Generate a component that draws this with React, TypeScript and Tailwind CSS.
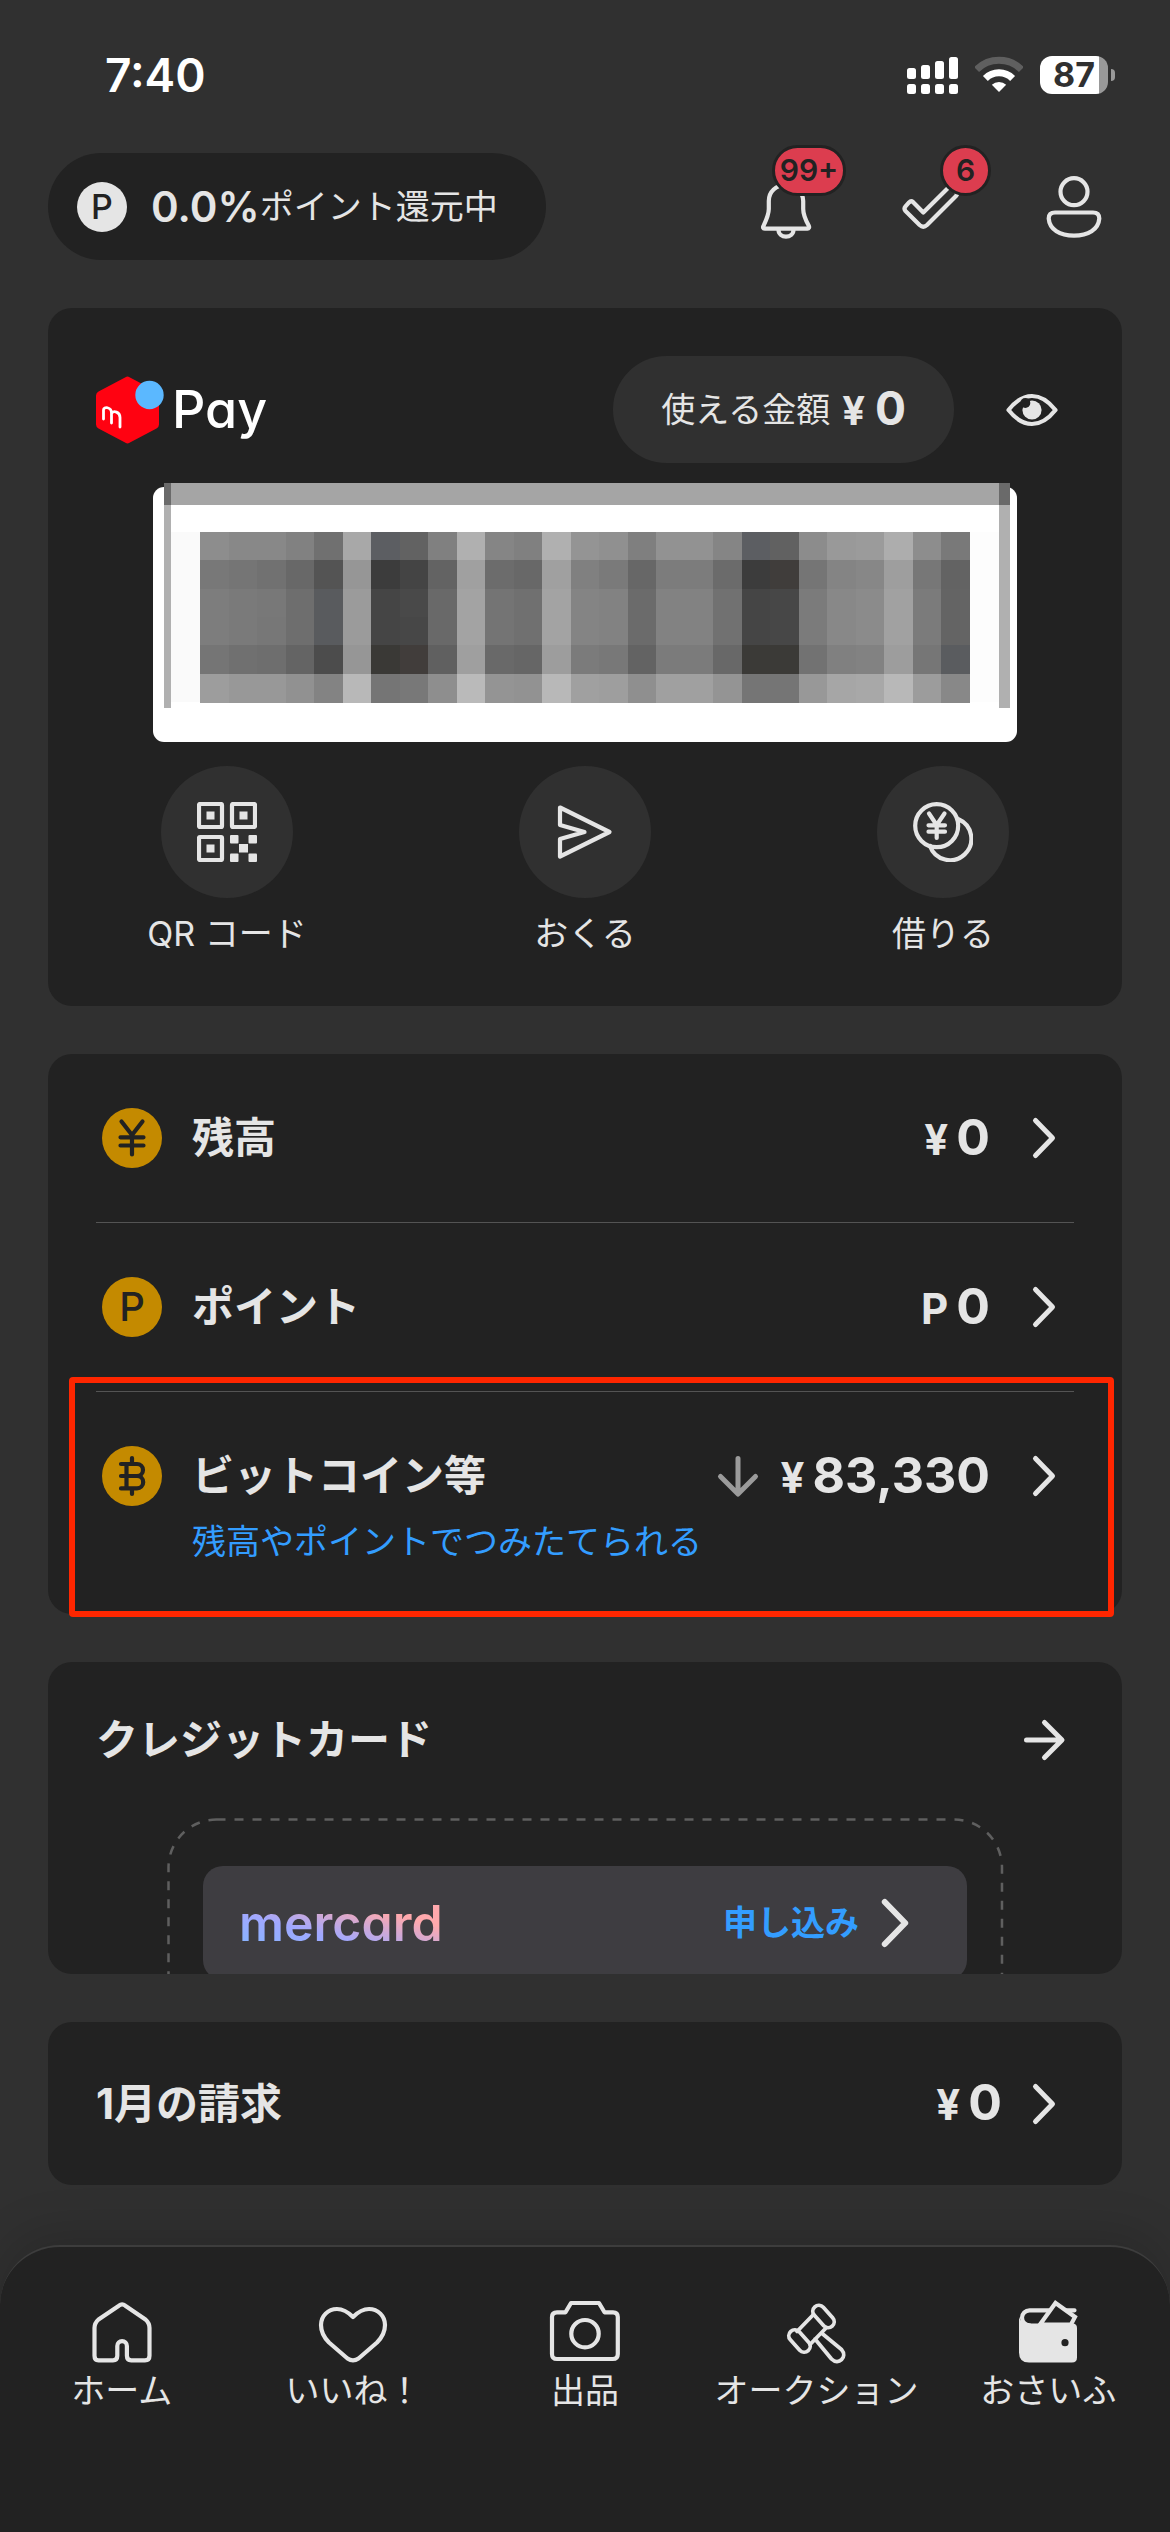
import type { ReactNode } from 'react'

// Columns of the masked barcode, one array per pixel row
const barcodeRows = [
  '8d8d8d 888888 888888 818181 707070 a8a8a8 5c5e62 626262 808080 b0b0b0 858585 808080 b0b0b0 949494 909090 7f7f7f 929292 929292 858585 5c5e62 616161 8c8c8c 999999 9b9b9b adadad 8d8d8d 797979',
  '787878 757575 717171 686868 545454 969696 3c3c3c 444444 636363 a0a0a0 6c6c6c 686868 a0a0a0 808080 7a7a7a 676767 7c7c7c 7c7c7c 6b6b6b 3c3c3c 403d3b 757575 848484 878787 9e9e9e 777777 636363',
  '7d7d7d 7a7a7a 787878 6e6e6e 595b5e 9b9b9b 454545 494949 696969 a3a3a3 747474 707070 a3a3a3 848484 828282 6b6b6b 828282 828282 717171 454545 474747 7b7b7b 888888 8b8b8b a1a1a1 7b7b7b 646464',
  '7d7d7d 7a7a7a 777777 6e6e6e 595b5e 9b9b9b 454545 474747 696969 a3a3a3 747474 707070 a3a3a3 848484 828282 6b6b6b 828282 828282 717171 454545 474747 7b7b7b 888888 8b8b8b a1a1a1 7b7b7b 646464',
  '757575 707070 6e6e6e 646464 4c4c4c 969696 3a3936 413d3b 606060 9f9f9f 696969 666666 9d9d9d 7b7b7b 787878 636363 7b7b7b 7b7b7b 686868 3b3a37 3b3a37 727272 808080 828282 9d9d9d 767676 5a5c5f',
  '9d9d9d 989898 989898 919191 838383 b8b8b8 757575 787878 8e8e8e bababa 949494 929292 b8b8b8 a0a0a0 9e9e9e 8f8f8f a0a0a0 a0a0a0 949494 757575 757575 989898 a6a6a6 a8a8a8 b8b8b8 9c9c9c 888888'
].map((row) => row.split(' '))

const line = {
  fill: 'none',
  stroke: 'currentColor',
  strokeWidth: 4.2,
  strokeLinecap: 'round',
  strokeLinejoin: 'round'
} as const

const SignalIcon = () => (
  <svg className="w-[51px] h-[38px]" viewBox="0 0 51 38" fill="#fff">
    <rect x="0" y="12" width="9" height="11" rx="2.5" />
    <rect x="14" y="9" width="9" height="14" rx="2.5" />
    <rect x="28" y="5" width="9" height="18" rx="2.5" />
    <rect x="42" y="1" width="9" height="22" rx="2.5" />
    {[0, 14, 28, 42].map((x) => (
      <rect key={x} x={x} y="28" width="9" height="10" rx="2.5" />
    ))}
  </svg>
)

const WifiIcon = () => (
  <svg className="w-12 h-[38px]" viewBox="0 0 48 38" fill="none">
    <path
      d="M1.6 13.6A31.7 31.7 0 0 1 46.4 13.6"
      stroke="#5f5f5f"
      strokeWidth="7"
    />
    <path
      d="M10.4 22.4A19.3 19.3 0 0 1 37.6 22.4"
      stroke="#fff"
      strokeWidth="7"
    />
    <path d="M24 36L16.8 28.8A10.5 10.5 0 0 1 31.2 28.8Z" fill="#fff" />
  </svg>
)

const BellIcon = () => (
  <svg className="size-[72px]" viewBox="0 0 72 72" {...line}>
    <path d="M15 57.7H57.5c1.4 0 2-1.3 1.4-2.6C55 48 53.2 43 53.2 38V30C53 20.5 46 14 36 14S18.8 20.5 18.8 30v8c0 5-2 10-5.4 17.1-.8 1.3-.1 2.6 1.6 2.6z" />
    <path d="M28.5 58.5C28.5 68 43.5 68 43.5 58.5" />
  </svg>
)

const CheckIcon = () => (
  <svg className="size-[72px]" viewBox="0 0 72 72" {...line}>
    <path d="M19 31L29.3 41.5L54 17q2.2-2 4.4 0l3.6 3.6q2 2.2 0 4.4L33 54q-3.7 3.4-7.4 0L11.5 40q-2-2.3 0-4.6l3.5-4q2-2 4-.4z" />
  </svg>
)

const PersonIcon = () => (
  <svg className="size-[72px]" viewBox="0 0 72 72" {...line}>
    <circle cx="36" cy="20.7" r="13.5" />
    <path d="M17 41.5H55q6.3 0 6.3 6C60.5 58.5 50 64.7 36 64.7S11.5 58.5 10.7 47.5q0-6 6.3-6z" />
  </svg>
)

const MerpayMark = () => (
  <svg className="size-[68px]" viewBox="0 0 68 68">
    <path
      d="M29.5 1.2q2-1.2 4 0L60.5 15.5q2.500 1.400 2.500 4V48.500q0 2.600-2.500 4L33.500 66.800q-2 1.200-4 0L2.500 52.500Q0 51.100 0 48.500V19.500q0-2.600 2.500-4z"
      fill="#ff0211"
    />
    <path
      d="M7.5 43V34c0-4 8-3 8 3v10M15.5 37.5c2-3.5 8.500-1.500 8.500 4V51"
      fill="none"
      stroke="#fff"
      strokeWidth="2.8"
      strokeLinecap="round"
    />
    <circle cx="53.5" cy="19" r="14.2" fill="#5bb8ff" />
  </svg>
)

const EyeIcon = () => (
  <svg className="w-[52px] h-[34px]" viewBox="0 0 52 34">
    <path
      d="M2.5 17C10 7.5 18 3 26 3S42 7.5 49.5 17C42 26.5 34 31 26 31S10 26.5 2.5 17Z"
      {...line}
    />
    <circle cx="26" cy="17" r="9.6" fill="currentColor" />
    <circle cx="19.3" cy="10" r="5" fill="#222" />
  </svg>
)

const QrIcon = () => (
  <svg className="size-[60px]" viewBox="0 0 60 60" fill="currentColor">
    {[
      [0, 0],
      [33, 0],
      [0, 33]
    ].map(([x, y]) => (
      <g key={`${x}-${y}`}>
        <rect
          x={x + 2}
          y={y + 2}
          width="23"
          height="23"
          rx="1"
          fill="none"
          stroke="currentColor"
          strokeWidth="4.2"
        />
        <rect x={x + 9.5} y={y + 9.5} width="8" height="8" />
      </g>
    ))}
    <rect x="33" y="33" width="8.5" height="8.5" rx="1" />
    <rect x="51.5" y="33" width="8.5" height="8.5" rx="1" />
    <rect x="42" y="42" width="9" height="8.5" />
    <rect x="33" y="51.5" width="8.5" height="8.5" rx="1" />
    <rect x="51.5" y="51.5" width="8.5" height="8.5" rx="1" />
  </svg>
)

const SendIcon = () => (
  <svg className="size-[60px]" viewBox="0 0 60 60" {...line}>
    <path d="M5 5.5L54.5 30L5 54.5V37L29.5 30L5 23Z" />
  </svg>
)

const CoinsIcon = () => (
  <svg className="size-[60px]" viewBox="0 0 60 60" {...line}>
    <circle cx="23.7" cy="23.7" r="21.5" />
    <path d="M45.5 17.3A21.3 21.3 0 1 1 17 44" />
    <path d="M16 11.5L23.7 23L31.5 11.5M23.7 23V36M15.5 23.3H32M15.5 29.7H32" />
  </svg>
)

const YenCoin = () => (
  <svg className="size-[60px]" viewBox="0 0 60 60">
    <circle cx="30" cy="30" r="30" fill="#c48a00" />
    <path
      d="M19.5 13.5L30 27L40.5 13.5M30 27V46.5M18.5 29.3H41.5M18.5 37.5H41.5"
      {...line}
      stroke="#222"
    />
  </svg>
)

const PointCoin = () => (
  <span className="flex size-[60px] items-center justify-center rounded-full bg-[#c48a00] text-[40px] font-medium text-[#222]">
    P
  </span>
)

const BitcoinCoin = () => (
  <svg className="size-[60px]" viewBox="0 0 60 60">
    <circle cx="30" cy="30" r="30" fill="#c48a00" />
    <path
      d="M19 18H35a6 6 0 0 1 0 12H19M35 30a6.2 6.2 0 0 1 0 12.4H19M24.5 18V42.4M30 12v6M30 42.4V48"
      {...line}
      stroke="#222"
    />
  </svg>
)

const ChevronIcon = ({ className = 'size-[60px]' }: { className?: string }) => (
  <svg className={className} viewBox="0 0 60 60" {...line} strokeWidth="5">
    <path d="M21.5 12.5L38.5 30L21.5 47.5" />
  </svg>
)

const ArrowRightIcon = () => (
  <svg className="size-[60px]" viewBox="0 0 60 60" {...line} strokeWidth="5">
    <path d="M12.5 30H47M30.5 12.5L48 30L30.5 47.5" />
  </svg>
)

const ArrowDownIcon = () => (
  <svg
    className="size-[60px] text-[#9b9b9b]"
    viewBox="0 0 60 60"
    {...line}
    strokeWidth="5"
  >
    <path d="M30 12.5V47M12.5 30.5L30 48L47.5 30.5" />
  </svg>
)

const HomeIcon = () => (
  <svg className="size-[72px]" viewBox="0 0 72 72" {...line}>
    <path d="M12.5 65.3H27q4.3 0 4.3-4.5V51a4.8 4.8 0 0 1 9.6 0v9.8q0 4.5 4.3 4.5H59q4.5 0 4.5-4.6V33q0-5-4-8.5L39.3 10.7q-3.2-2.6-6.4 0L12.5 24.5q-4 3.5-4 8.5v27.7q0 4.6 4 4.6z" />
  </svg>
)

const HeartIcon = () => (
  <svg className="size-[72px]" viewBox="0 0 72 72" {...line}>
    <path d="M36 22C31 17 26 14 20 14C11 14 4 21 4 30c0 7 3 12.5 8 17.5L30.5 63.5q5.5 3.6 11 0L60 47.5c5-5 8-10.5 8-17.5 0-9-7-16-16-16-6 0-11 3-16 8z" />
  </svg>
)

const CameraIcon = () => (
  <svg className="size-[72px]" viewBox="0 0 72 72" {...line}>
    <path d="M8 17.3H16.5L22 8H50L55.5 17.3H64q4.8 0 4.8 4.8V59q0 5-5 5H8q-5 0-5-5V22q0-4.7 5-4.7z" />
    <circle cx="36" cy="38.7" r="13.7" />
  </svg>
)

const GavelIcon = () => (
  <svg className="size-[72px]" viewBox="0 0 72 72" {...line} strokeWidth="3.8">
    <rect
      x="29.5"
      y="15.5"
      width="26"
      height="12"
      rx="6"
      transform="rotate(48 42.5 21.5)"
    />
    <rect
      x="5.5"
      y="40"
      width="26"
      height="12"
      rx="6"
      transform="rotate(48 18.5 46)"
    />
    <path d="M32.5 19.5L16 36.5M45.5 32.5L29 49.5M34 44L50.5 64c7 7 16.5-2 10-9.5L40.5 38" />
  </svg>
)

const WalletIcon = () => (
  <svg className="size-[72px]" viewBox="0 0 72 72">
    <path d="M62.5 15.3H17.5a7.5 7.5 0 0 0 0 15" {...line} />
    <path
      d="M7 22q1.5 6.5 10 6.5H60.5q4.5 0 4.5 4.5V62.5q0 5-5 5H17q-10 0-10-10z"
      fill="currentColor"
    />
    <path
      d="M28 29.5L43.5 8L63 22L59 29.5Z"
      {...line}
      fill="#222"
      strokeLinejoin="miter"
    />
    <circle cx="53" cy="47.7" r="3.6" fill="#222" />
  </svg>
)

const MaskedBarcode = () => (
  <svg
    className="block w-full overflow-visible"
    viewBox="0 0 864 255"
    role="img"
    aria-label="バーコード"
    shapeRendering="crispEdges"
  >
    <rect width="864" height="255" rx="11" fill="#fff" shapeRendering="auto" />
    <rect x="11" y="18" width="7" height="203" fill="#b0b0b0" />
    <rect x="846" y="18" width="11" height="203" fill="#b0b0b0" />
    <rect x="18" y="45" width="29" height="170" fill="#fafafa" />
    <rect x="817" y="45" width="29" height="170" fill="#fdfdfd" />
    <rect x="11" y="-4" width="846" height="22" fill="#a5a5a5" />
    <rect x="11" y="-4" width="7" height="22" fill="#6a6a6a" />
    <rect x="846" y="-4" width="11" height="22" fill="#6a6a6a" />
    {barcodeRows.map((row, r) =>
      row.map((color, c) => (
        <rect
          key={`${r}-${c}`}
          x={47 + c * 28.5}
          y={45 + r * 28.3}
          width="29"
          height="29"
          fill={`#${color}`}
        />
      ))
    )}
  </svg>
)

const Card = ({
  children,
  className = ''
}: {
  children: ReactNode
  className?: string
}) => (
  <section className={`rounded-3xl bg-[#222] ${className}`}>{children}</section>
)

const Amount = ({ unit, value }: { unit: string; value: string }) => (
  <span className="flex items-baseline gap-2 font-bold leading-[60px]">
    <span className="text-[42px]">{unit}</span>
    <span className="text-[50px]">{value}</span>
  </span>
)

const HeaderButton = ({
  label,
  icon,
  badge
}: {
  label: string
  icon: ReactNode
  badge?: ReactNode
}) => (
  <button type="button" aria-label={label} className="relative size-[72px]">
    {icon}
    {badge}
  </button>
)

const balances = [
  { icon: <YenCoin />, title: '残高', unit: '¥', value: '0' },
  { icon: <PointCoin />, title: 'ポイント', unit: 'P', value: '0' },
  {
    icon: <BitcoinCoin />,
    title: 'ビットコイン等',
    unit: '¥',
    value: '83,330',
    falling: true,
    note: '残高やポイントでつみたてられる'
  }
]

const actions = [
  { icon: <QrIcon />, label: 'QR コード' },
  { icon: <SendIcon />, label: 'おくる' },
  { icon: <CoinsIcon />, label: '借りる' }
]

const tabs = [
  { icon: <HomeIcon />, label: 'ホーム' },
  { icon: <HeartIcon />, label: 'いいね！' },
  { icon: <CameraIcon />, label: '出品' },
  { icon: <GavelIcon />, label: 'オークション' },
  { icon: <WalletIcon />, label: 'おさいふ' }
]

export default function App() {
  return (
    <div
      lang="ja"
      className="flex min-h-screen flex-col bg-[#303030] font-['Inter','Noto_Sans_CJK_JP',sans-serif] text-[34px] leading-[48px] text-[#e5e5e5]"
    >
      {/* STATUS BAR */}
      <div className="flex h-[149px] items-center justify-between pl-[105px] pr-[55px] text-white">
        <span className="text-[46px] font-semibold">7:40</span>
        <div className="flex items-center gap-[17px]">
          <SignalIcon />
          <WifiIcon />
          <div className="flex items-center gap-[3px]">
            <span className="flex h-[38px] w-[68px] items-center justify-center rounded-xl bg-[linear-gradient(to_right,#fff_59px,#999_59px)] text-[34px] font-bold text-[#303030]">
              87
            </span>
            <span className="h-3 w-1 rounded-r-full bg-[#999]" />
          </div>
        </div>
      </div>

      {/* HEADER */}
      <header className="flex items-center justify-between px-12 pt-1">
        <button
          type="button"
          className="flex h-[107px] items-center rounded-full bg-[#222] pl-[29px] pr-12"
        >
          <span className="mr-6 flex size-[50px] items-center justify-center rounded-full bg-[#e5e5e5] text-[34px] font-medium text-[#222]">
            P
          </span>
          <span className="text-[42px] font-semibold">0.0%</span>
          <span>ポイント還元中</span>
        </button>

        <div className="mr-3 flex gap-[72px]">
          <HeaderButton
            label="お知らせ"
            icon={<BellIcon />}
            badge={
              <span className="absolute left-[22px] -top-[26px] flex h-[51px] w-[74px] items-center justify-center rounded-full border-3 border-[#222] bg-[#dc3d4f] text-[30px] font-semibold text-[#222]">
                99+
              </span>
            }
          />
          <HeaderButton
            label="やることリスト"
            icon={<CheckIcon />}
            badge={
              <span className="absolute left-[46px] -top-[26px] flex size-[51px] items-center justify-center rounded-full border-3 border-[#222] bg-[#dc3d4f] text-[30px] font-semibold text-[#222]">
                6
              </span>
            }
          />
          <HeaderButton label="アカウント" icon={<PersonIcon />} />
        </div>
      </header>

      <main className="flex flex-col gap-12 px-12 py-12">
        {/* PAY */}
        <Card className="py-12">
          <div className="flex items-center px-12">
            <div className="flex items-center gap-2">
              <MerpayMark />
              <span className="text-[52px] font-medium text-white [font-feature-settings:'cv11']">
                Pay
              </span>
            </div>
            <button
              type="button"
              className="ml-auto flex h-[107px] items-center gap-3 rounded-full bg-[#303030] px-12"
            >
              <span>使える金額</span>
              <span className="flex items-baseline gap-2.5 font-bold">
                <span className="text-[40px]">¥</span>
                <span className="text-[46px]">0</span>
              </span>
            </button>
            <button
              type="button"
              aria-label="金額を隠す"
              className="ml-9 flex h-[72px] w-[84px] items-center justify-center"
            >
              <EyeIcon />
            </button>
          </div>

          <div className="mt-6 px-[105px]">
            <MaskedBarcode />
          </div>

          <div className="mt-6 grid grid-cols-3">
            {actions.map(({ icon, label }) => (
              <button
                key={label}
                type="button"
                className="flex flex-col items-center gap-3"
              >
                <span className="flex size-[132px] items-center justify-center rounded-full bg-[#303030]">
                  {icon}
                </span>
                {label}
              </button>
            ))}
          </div>
        </Card>

        {/* BALANCES */}
        <Card className="px-12">
          {balances.map(({ icon, title, unit, value, falling, note }) => (
            <a
              key={title}
              href="#"
              className={
                note
                  ? 'relative block pt-[54px] pb-12'
                  : 'block border-b border-[#545454] py-[54px]'
              }
            >
              <div className="flex h-[60px] items-center">
                <span className="mr-6 flex w-[72px] justify-center">
                  {icon}
                </span>
                <span className="text-[42px] font-bold">{title}</span>
                <div className="ml-auto flex items-center gap-6">
                  <div className="flex items-center gap-3">
                    {falling && <ArrowDownIcon />}
                    <Amount unit={unit} value={value} />
                  </div>
                  <ChevronIcon />
                </div>
              </div>
              {note && (
                <>
                  <p className="mt-3 pl-24 text-[#339dff]">{note}</p>
                  <span className="absolute -top-[15px] -bottom-[3px] -left-[27px] -right-10 rounded-sm border-6 border-[#ff2600]" />
                </>
              )}
            </a>
          ))}
        </Card>

        {/* CREDIT CARD */}
        <Card className="h-[312px] overflow-hidden px-12 pt-12">
          <a href="#" className="flex h-[60px] items-center justify-between">
            <h2 className="text-[42px] font-bold">クレジットカード</h2>
            <ArrowRightIcon />
          </a>
          <div className="relative mx-[71px] mt-12 h-[220px] px-9 pt-12">
            <svg
              className="absolute inset-0 size-full overflow-visible"
              fill="none"
            >
              <rect
                x="1.5"
                y="1.5"
                width="99.7%"
                height="400"
                rx="48"
                stroke="#5f5f5f"
                strokeWidth="2.5"
                strokeDasharray="9 9"
              />
            </svg>
            <a
              href="#"
              className="relative flex h-[114px] items-center rounded-[20px] bg-[#3e3d41] px-9"
            >
              <span className="bg-[linear-gradient(15deg,#7fb8ff_0%,#a0a8ff_35%,#ffa9ad_70%)] bg-clip-text text-[50px] leading-[60px] font-semibold text-transparent [font-feature-settings:'cv11']">
                mercard
              </span>
              <span className="ml-auto font-bold text-[#339dff]">
                申し込み
              </span>
              <ChevronIcon className="size-[72px]" />
            </a>
          </div>
        </Card>

        {/* BILLING */}
        <Card>
          <a href="#" className="flex items-center px-12 py-[50px]">
            <span className="text-[42px] leading-[60px] font-bold">
              1月の請求
            </span>
            <div className="ml-auto flex items-center gap-3">
              <Amount unit="¥" value="0" />
              <ChevronIcon />
            </div>
          </a>
        </Card>
      </main>

      {/* TAB BAR */}
      <nav className="mt-auto grid grid-cols-5 rounded-t-[60px] border-t-2 border-[#3d3d3d] bg-[#222] px-[6px] pt-12 pb-[117px] shadow-[0_-12px_48px_rgba(0,0,0,0.15)]">
        {tabs.map(({ icon, label }) => (
          <a
            key={label}
            href="#"
            className="flex flex-col items-center whitespace-nowrap"
          >
            {icon}
            <span>{label}</span>
          </a>
        ))}
      </nav>
    </div>
  )
}
